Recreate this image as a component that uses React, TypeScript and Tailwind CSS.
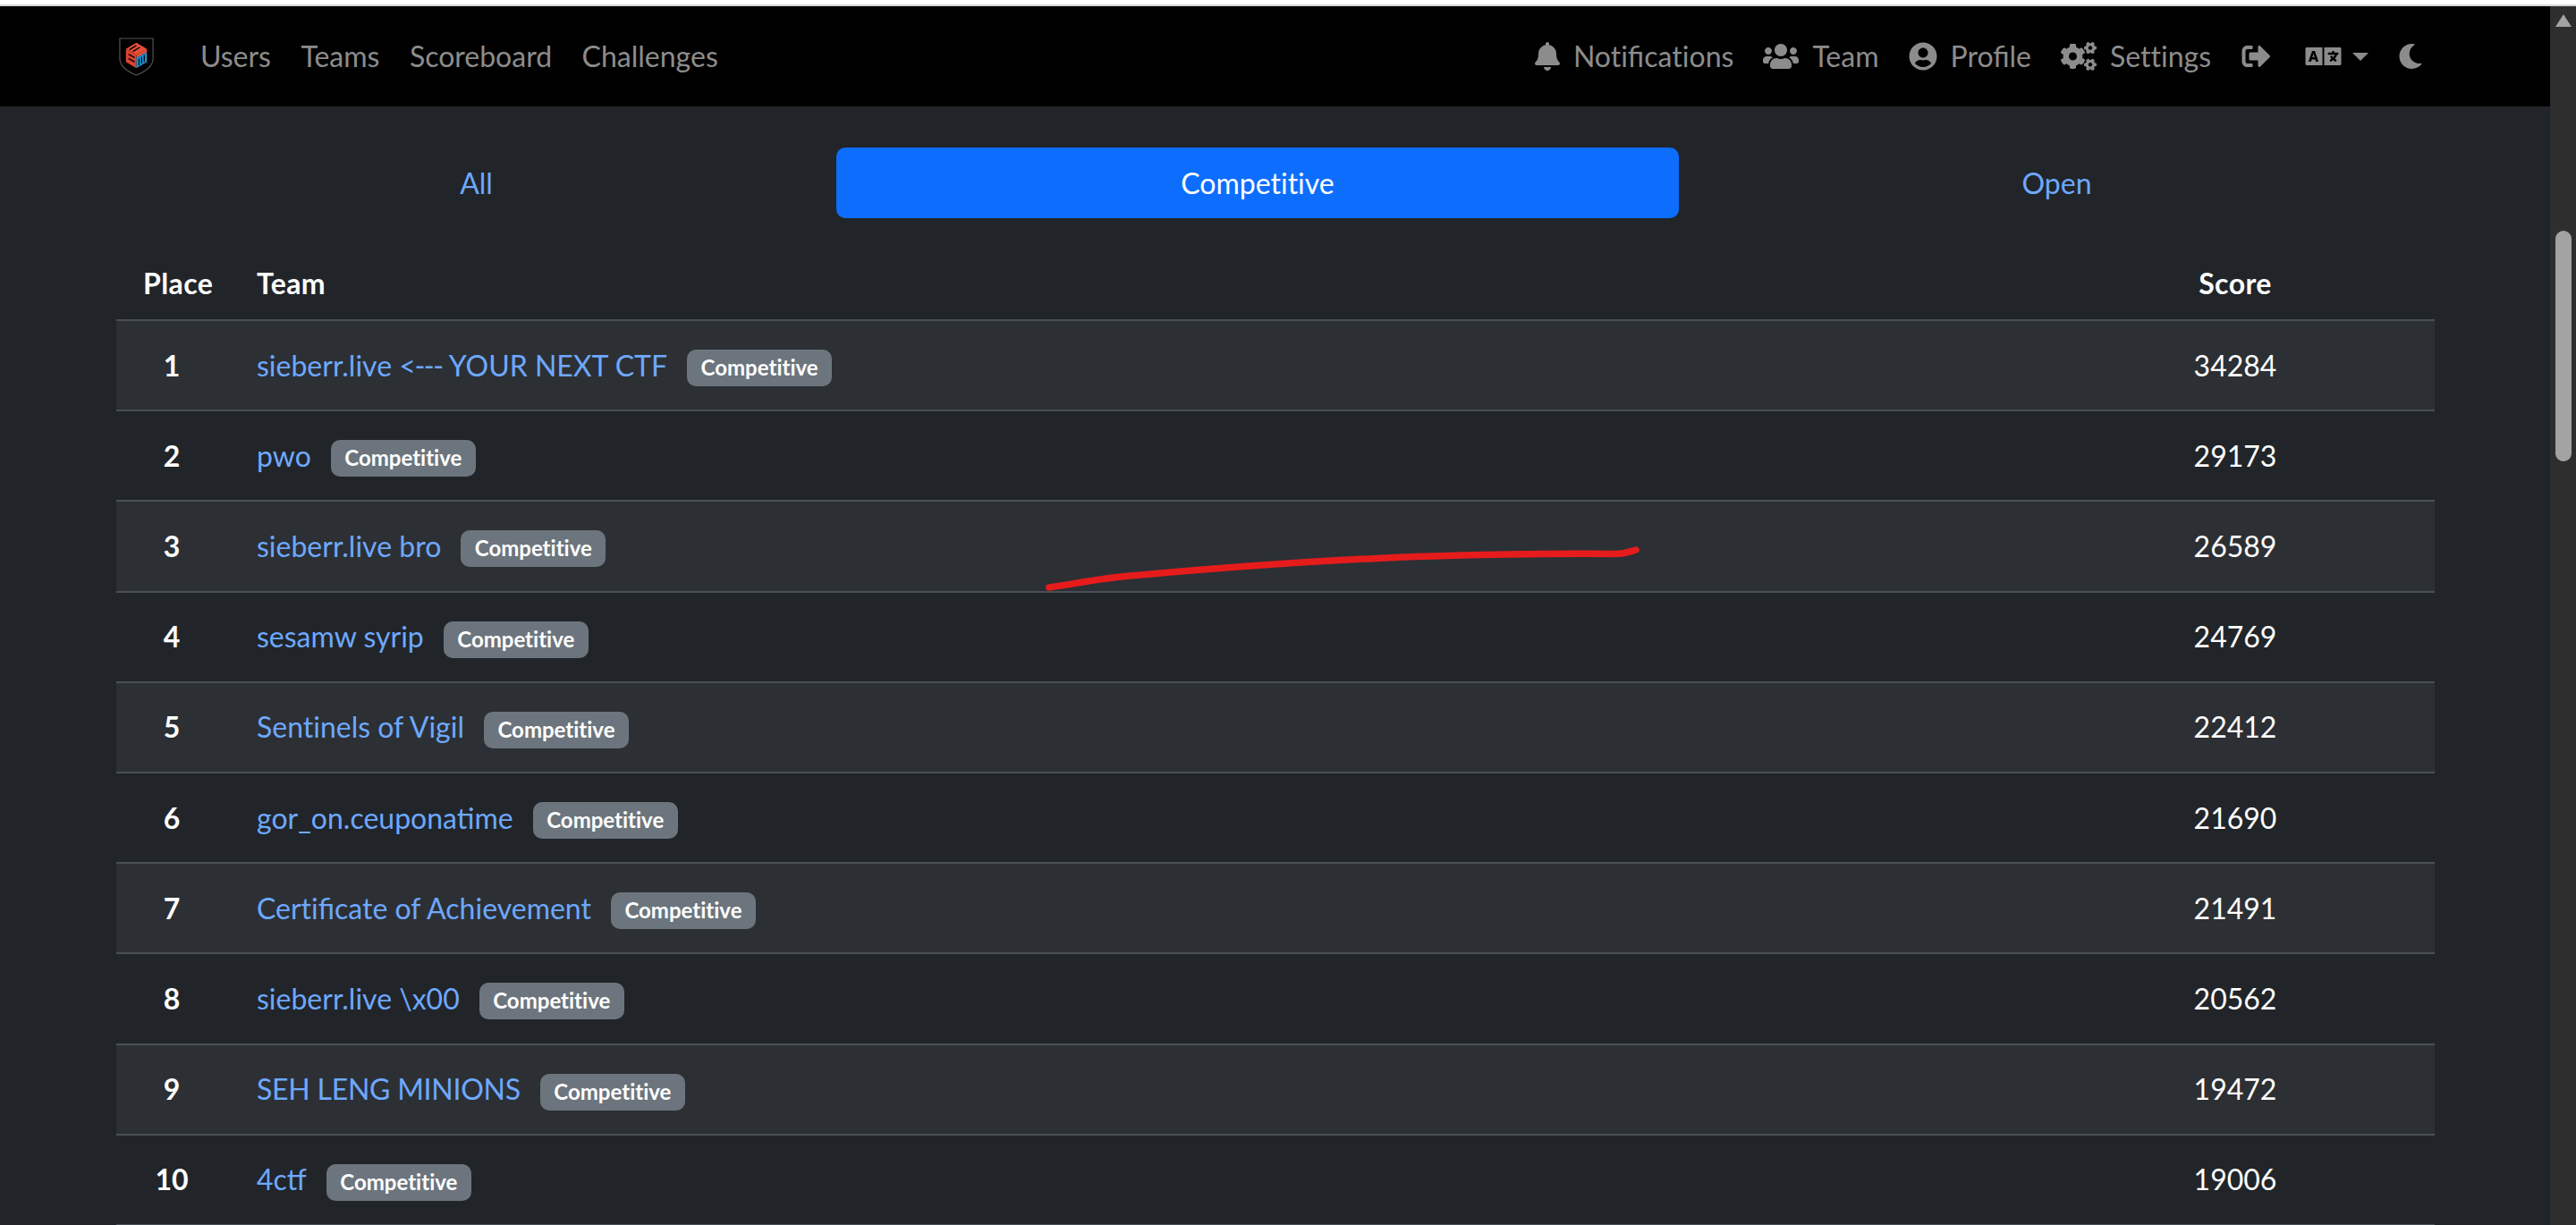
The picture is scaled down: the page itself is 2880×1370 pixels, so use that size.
import { FaBell, FaUsers, FaUserCircle, FaCogs, FaSignOutAlt, FaLanguage, FaMoon } from "react-icons/fa";

function NoLiga({ children }: { children: React.ReactNode }) {
  return <span className="[font-variant-ligatures:no-common-ligatures]">{children}</span>;
}

const rows: { name: React.ReactNode; score: string }[] = [
  {
    name: (
      <>
        sieberr.live <span className="tracking-[-1.4px]">{"<---"}</span> YOUR NEXT CTF
      </>
    ),
    score: "34284",
  },
  { name: "pwo", score: "29173" },
  { name: "sieberr.live bro", score: "26589" },
  { name: "sesamw syrip", score: "24769" },
  { name: <NoLiga>Sentinels of Vigil</NoLiga>, score: "22412" },
  { name: "gor_on.ceuponatime", score: "21690" },
  {
    name: (
      <>
        <NoLiga>Certi</NoLiga>ficate of Achievement
      </>
    ),
    score: "21491",
  },
  { name: "sieberr.live \\x00", score: "20562" },
  { name: <span className="tracking-[-0.25px]">SEH LENG MINIONS</span>, score: "19472" },
  { name: "4ctf", score: "19006" },
];

function Logo() {
  return (
    <svg viewBox="0 0 40 44" className="h-[43px] w-[41px] shrink-0">
      <path d="M1 1H39V24C39 33 30 39 20 43C10 39 1 33 1 24Z" fill="#000" stroke="#555" strokeWidth="1.2" />
      <path d="M8 13L20 6L32 13L20 20Z" fill="#e8503a" />
      <path d="M8 13L20 20V35L8 28Z" fill="#d9432f" />
      <path d="M20 20L32 13V17L20 23Z" fill="#e8503a" />
      <path d="M20 23L32 17V28L20 35Z" fill="#1d93d2" />
      <path d="M12 14L20 9M16 16L24 11M11 19L18 23M11 24L18 28" stroke="#000" strokeWidth="1.4" fill="none" />
      <path d="M23 32V24M26 30V22M29 28V20" stroke="#000" strokeWidth="1.2" fill="none" />
    </svg>
  );
}

function NavItem({ icon, label }: { icon: React.ReactNode; label: React.ReactNode }) {
  return (
    <a className="flex items-center gap-[15px] text-[#8c8c8c]">
      {icon}
      <span>{label}</span>
    </a>
  );
}

export default function App() {
  return (
    <div className="relative flex h-[1370px] w-[2880px] flex-col overflow-hidden bg-[#2e2e2e] text-[32px] leading-[48px] text-white [font-family:Lato,'Liberation_Sans',sans-serif]">
      <div className="h-[7px] shrink-0 border-b-2 border-[#d4d4d4] bg-white" />
      <div className="flex min-h-0 flex-1">
        <div className="flex min-w-0 flex-1 flex-col bg-[#212529]">
          <nav className="flex h-[112px] shrink-0 items-center justify-between bg-black pl-[132px] pr-[142px] text-[#8c8c8c]">
            <div className="flex items-center">
              <Logo />
              <div className="ml-[51px] flex gap-[33.500px]">
                <a>Users</a>
                <a>Teams</a>
                <a>Scoreboard</a>
                <a>Challenges</a>
              </div>
            </div>
            <div className="flex items-center gap-[33px]">
              <NavItem
                icon={<FaBell className="h-[32px] w-[28px]" />}
                label={
                  <>
                    <NoLiga>Noti</NoLiga>fica<NoLiga>tions</NoLiga>
                  </>
                }
              />
              <NavItem icon={<FaUsers className="h-[32px] w-[40px]" />} label="Team" />
              <NavItem icon={<FaUserCircle className="h-[32px] w-[32px]" />} label="Profile" />
              <NavItem icon={<FaCogs className="h-[32px] w-[40px]" />} label={<NoLiga>Settings</NoLiga>} />
              <FaSignOutAlt className="ml-[1px] h-[32px] w-[33px]" />
              <div className="ml-[5px] flex items-center gap-[12px]">
                <FaLanguage className="h-[32px] w-[41px]" />
                <div className="h-0 w-0 border-x-[9px] border-t-[9px] border-x-transparent border-t-[#8c8c8c]" />
              </div>
              <FaMoon className="h-[30px] w-[28px]" />
            </div>
          </nav>

          <main className="flex flex-col pl-[130px] pr-[129px] pt-[46px]">
            <div className="flex h-[79px] text-center text-[#6ea8fe]">
              <a className="flex w-[805px] items-center justify-center">All</a>
              <a className="flex w-[942px] items-center justify-center rounded-[10px] bg-[#0d6efd] text-white [font-variant-ligatures:no-common-ligatures]">Competitive</a>
              <a className="flex flex-1 items-center justify-center">Open</a>
            </div>

            <div className="mt-[34px] grid h-[81px] grid-cols-[124px_1fr_446px] items-center gap-x-[33px] border-b-2 border-[#495057] pb-[2px] font-bold tracking-[0.4px]">
              <div className="pl-[30px]">Place</div>
              <div>Team</div>
              <div className="text-center">Score</div>
            </div>

            {rows.map(({ name, score }, i) => (
              <div
                key={i}
                className={`grid h-[101.2px] shrink-0 grid-cols-[124px_1fr_446px] items-center gap-x-[33px] border-b-2 border-[#495057] ${i % 2 === 0 ? "bg-[#2c3034]" : ""}`}
              >
                <div className="text-center font-bold">{i + 1}</div>
                <div className="flex items-center gap-[22px]">
                  <a className="text-[#6ea8fe]">{name}</a>
                  <span className="mt-[6px] rounded-[10px] bg-[#6c757d] px-[15.500px] pb-[7px] pt-[6px] text-[24px] font-bold leading-[28px] text-white [font-variant-ligatures:no-common-ligatures]">
                    Competitive
                  </span>
                </div>
                <div className="text-center">{score}</div>
              </div>
            ))}
          </main>
        </div>

        <div className="flex w-[29px] shrink-0 flex-col items-center bg-[#2e2e2e] pl-[1px]">
          <div className="mt-[9px] h-0 w-0 border-x-[9px] border-b-[14px] border-x-transparent border-b-[#a3a3a3]" />
          <div className="mt-[228px] h-[258px] w-[18px] rounded-full bg-[#a3a3a3]" />
        </div>
      </div>

      <svg className="absolute left-0 top-0 h-[1370px] w-[2880px]" viewBox="0 0 2880 1370" fill="none">
        <path
          d="M1173 657C1200 653 1225 648 1253 645C1340 637 1470 626 1602 622C1680 619.500 1750 619 1805 619.500C1815 619.500 1822 617 1829 615"
          stroke="#e61c1c"
          strokeWidth="7.500"
          strokeLinecap="round"
        />
      </svg>
    </div>
  );
}
